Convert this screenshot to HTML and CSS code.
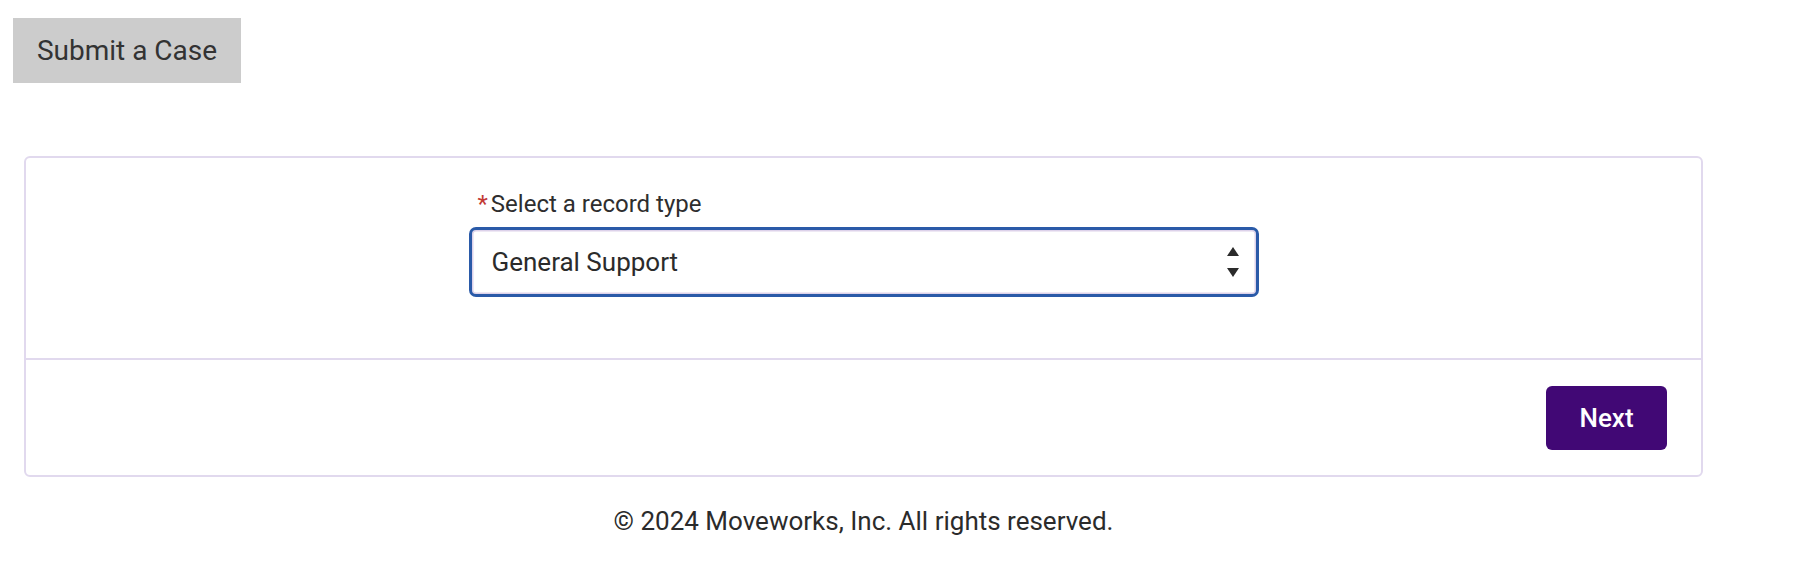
FILE: index.html
```html
<!DOCTYPE html>
<html lang="en">
<head>
<meta charset="utf-8">
<title>Submit a Case</title>
<link rel="stylesheet" href="styles.css">
</head>
<body>
<div class="page">
  <div class="header">
    <button class="submit-btn" type="button">Submit a Case</button>
  </div>
  <div class="card">
    <div class="card-body">
      <div class="field">
        <div class="label"><span class="req">*</span>Select a record type</div>
        <div class="select">
          <span class="select-value">General Support</span>
          <svg class="select-arrows" width="12" height="30" viewBox="0 0 12 30" aria-hidden="true">
            <polygon points="6,0 12,9 0,9" fill="#2b2b2b"/>
            <polygon points="0,21 12,21 6,30" fill="#2b2b2b"/>
          </svg>
        </div>
      </div>
    </div>
    <div class="card-footer">
      <button class="next-btn" type="button">Next</button>
    </div>
  </div>
  <div class="footer">© 2024 Moveworks, Inc. All rights reserved.</div>
</div>
</body>
</html>
```

FILE: styles.css
```css
html, body {
  margin: 0;
  padding: 0;
  background: #ffffff;
}

body {
  font-family: Roboto, "Liberation Sans", Arial, sans-serif;
  color: #2b2b2b;
}

.page {
  display: flex;
  flex-direction: column;
}

.header {
  padding: 18px 0 0 13px;
  display: flex;
}

.submit-btn {
  font-family: inherit;
  font-size: 28px;
  color: #333333;
  background: #cccccc;
  border: none;
  border-radius: 0;
  height: 65px;
  width: 228px;
  padding: 0;
  margin: 0;
  cursor: pointer;
}

.card {
  margin: 73px 0 0 24px;
  width: 1679px;
  box-sizing: border-box;
  border: 2px solid #e1d9ee;
  border-radius: 6px;
  background: #fff;
}

.card-body {
  padding: 28px 0 61px;
  display: flex;
  justify-content: center;
}

.field {
  width: 790px;
  display: flex;
  flex-direction: column;
}

.label {
  font-size: 24px;
  line-height: 36px;
  color: #2e2e2e;
  padding-left: 9px;
  margin-bottom: 5px;
}

.req {
  color: #c23934;
  margin-right: 3px;
}

.select {
  height: 70px;
  box-sizing: border-box;
  border: 3px solid #2a5aa8;
  border-radius: 7px;
  box-shadow: inset 0 0 0 1.5px #ddd2ea;
  display: flex;
  align-items: center;
  justify-content: space-between;
  padding: 0 17px 0 20px;
  background: #fff;
}

.select-value {
  font-size: 26px;
  color: #2b2b2b;
}

.select-arrows {
  display: block;
}

.card-footer {
  border-top: 2px solid #e1d9ee;
  padding: 26px 34px 25px 0;
  display: flex;
  justify-content: flex-end;
}

.next-btn {
  font-family: inherit;
  font-size: 26px;
  font-weight: 500;
  color: #ffffff;
  background: #410875;
  border: none;
  border-radius: 6px;
  width: 121px;
  height: 64px;
  padding: 0;
  cursor: pointer;
}

.footer {
  margin: 26px 0 0 24px;
  width: 1679px;
  text-align: center;
  font-size: 26px;
  line-height: 36px;
  color: #2b2b2b;
}
```
